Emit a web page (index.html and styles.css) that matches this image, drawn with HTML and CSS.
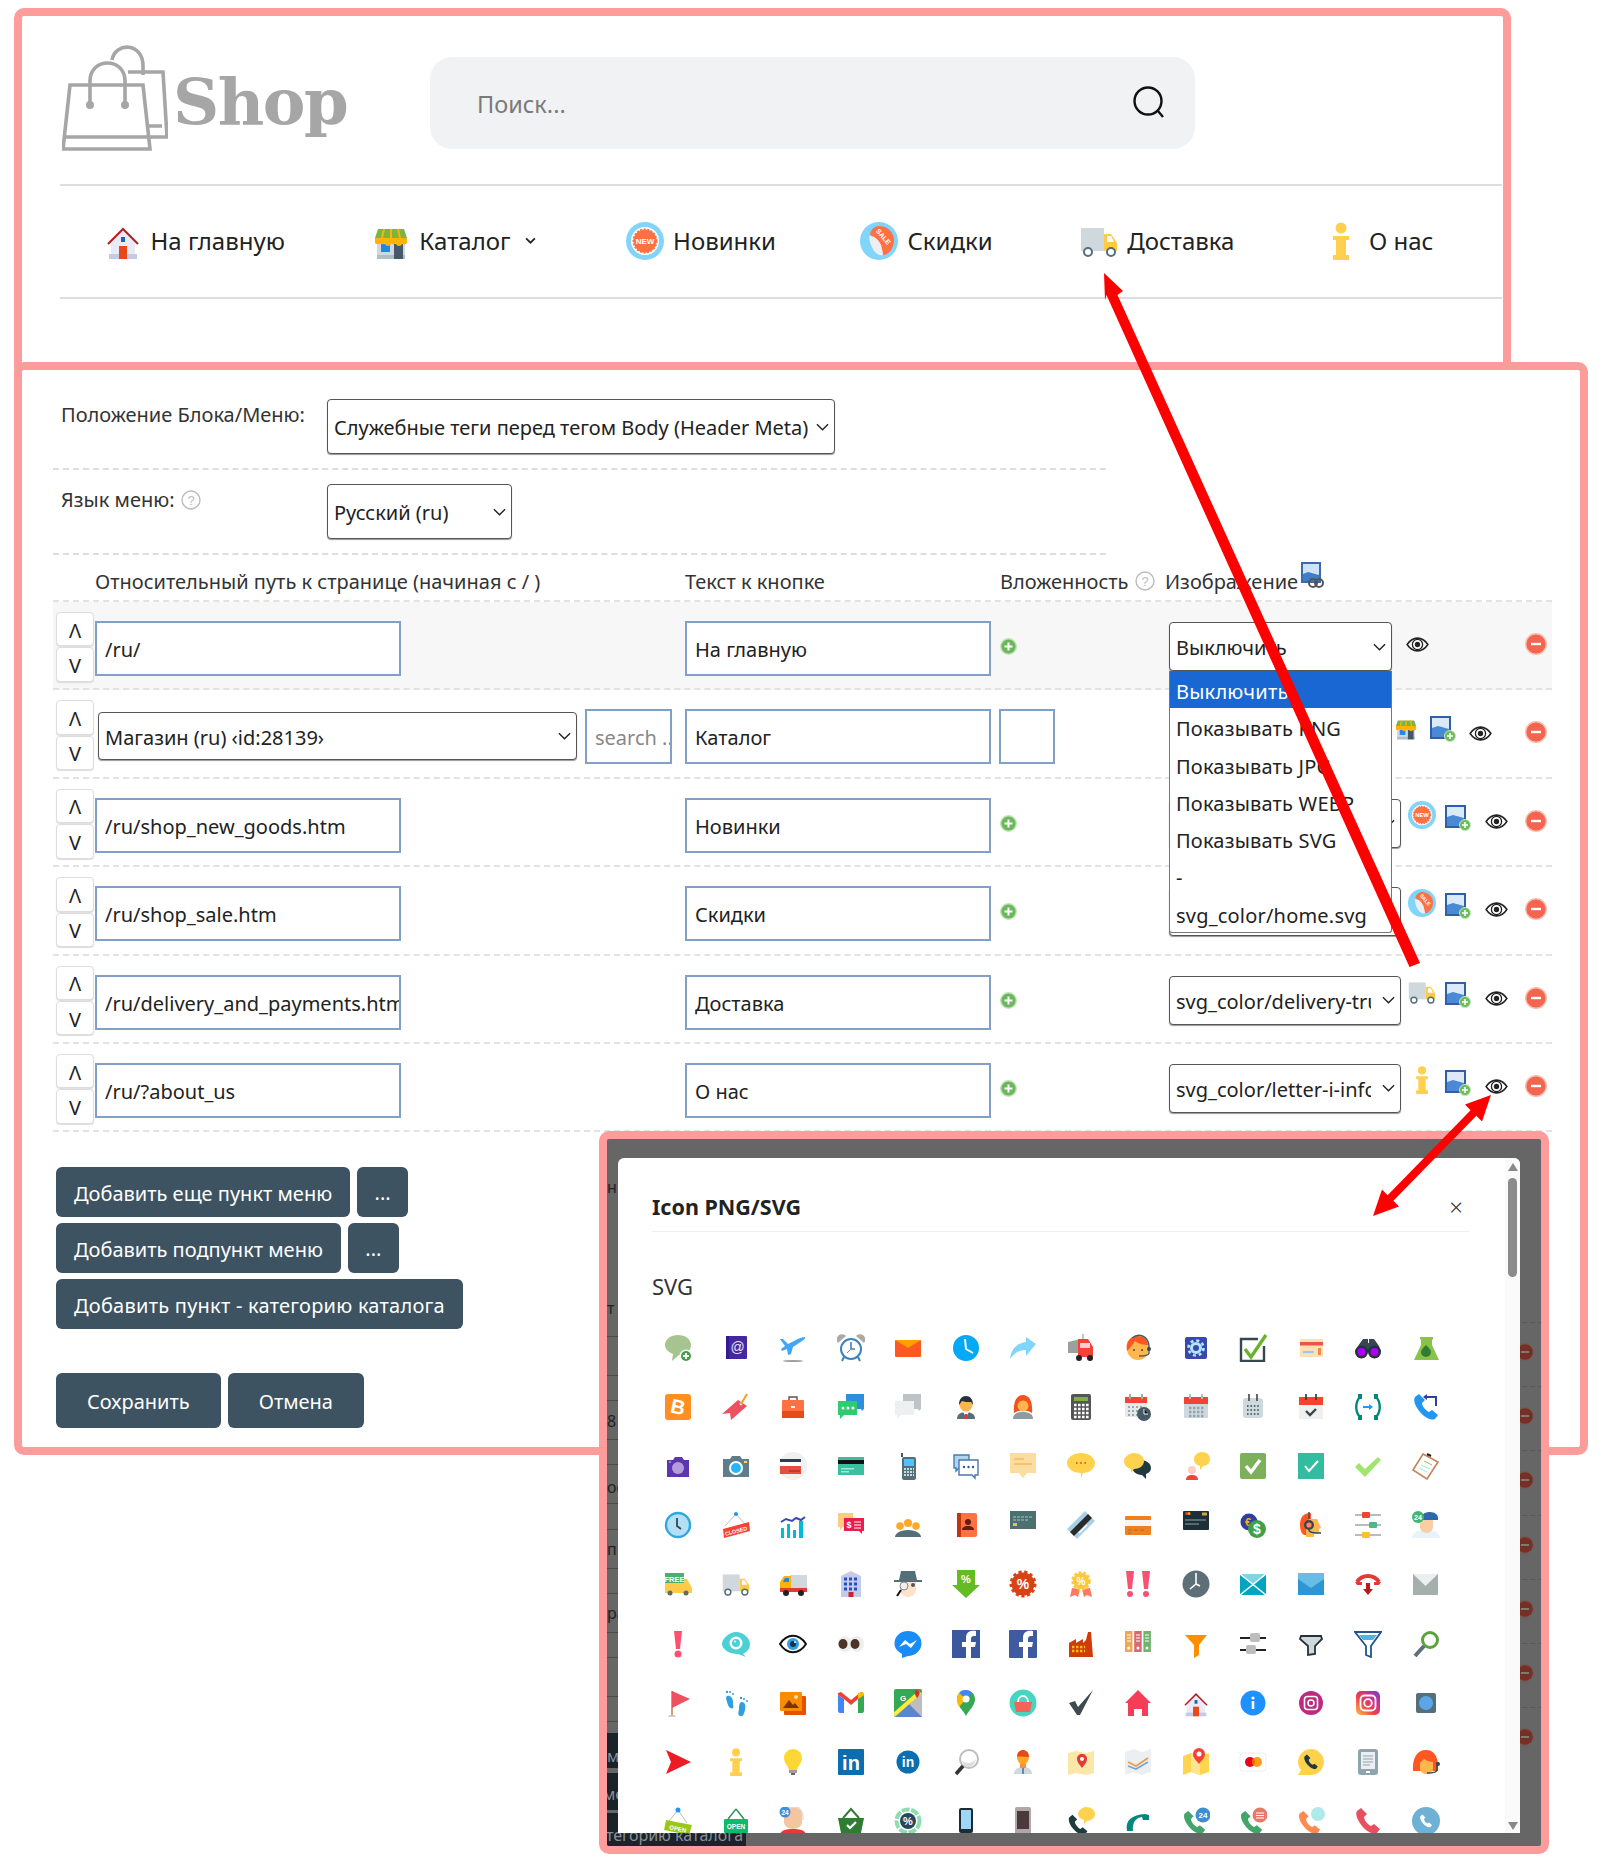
FILE: index.html
```html
<!DOCTYPE html>
<html lang="ru">
<head>
<meta charset="utf-8">
<title>Menu editor</title>
<link rel="stylesheet" href="styles.css">
</head>
<body>
<svg class="defs" aria-hidden="true">
<symbol id="home" viewBox="0 0 38 38"><path fill="#e8eaf6" d="M7 20 19 8l12 12v17H7z"/><path fill="#c5cae9" d="M5 32h28v5H5z"/><path fill="none" stroke="#b71c1c" stroke-width="2" d="M4 22 19 7l15 15"/><path fill="#e64a19" d="M15 24h8v13h-8z"/><path fill="#1565c0" d="M17 15h4v5h-4z"/></symbol>
<symbol id="shop" viewBox="0 0 38 38"><path fill="#cfd8dc" d="M5 18h28v19H5z"/><path fill="#b0bec5" d="M5 33h28v4H5z"/><path fill="#1e88e5" d="M9 22h9v8H9z"/><path fill="#455a64" d="M22 22h9v15h-9z"/><path fill="#7cb342" d="M6 7h26l3 9H3z"/><path fill="#ffb300" d="M3 16h32v5a3 3 0 0 1-5 0 3 3 0 0 1-6 0 3 3 0 0 1-5 0 3 3 0 0 1-6 0 3 3 0 0 1-5 0 3 3 0 0 1-5 0z"/><path stroke="#ffb300" stroke-width="2" d="M12 7l-2 9M19 7v9M26 7l2 9"/></symbol>
<symbol id="newb" viewBox="0 0 38 38"><circle cx="19" cy="19" r="19" fill="#81d4fa"/><circle cx="19" cy="19" r="14" fill="#fff"/><circle cx="19" cy="19" r="11.5" fill="#ff7043" stroke="#ff7043" stroke-width="2" stroke-dasharray="2 1.5"/><text x="19" y="22" class="st" font-size="8" fill="#fff">NEW</text></symbol>
<symbol id="sale" viewBox="0 0 38 38"><circle cx="19" cy="19" r="19" fill="#81d4fa"/><path fill="#ff7043" d="M19 4c8 0 15 6 15 14s-5 15-11 15l-2-10-11-11C11 7 15 4 19 4z"/><path fill="#eceff1" d="M9 14c4 0 8 1 12 9 1 4 2 8 2 10-7 2-13-8-14-19z"/><text x="23" y="17" class="st" font-size="7" fill="#fff" transform="rotate(50 23 15)">SALE</text></symbol>
<symbol id="truck" viewBox="0 0 38 38"><path fill="#cfd8dc" d="M1 6h23v23H1z"/><path fill="#ffca45" d="M24 12h7l6 9v8H24z"/><path fill="#fff" d="M27 14h4l3 6h-7z"/><circle cx="8" cy="30" r="4" fill="#fff" stroke="#546e7a" stroke-width="2"/><circle cx="31" cy="30" r="4" fill="#fff" stroke="#546e7a" stroke-width="2"/></symbol>
<symbol id="info" viewBox="0 0 38 38"><circle cx="19" cy="6" r="5.5" fill="#ffd050"/><path fill="#ffd050" d="M11 14h16v4h-3v15h3v5H11v-5h3V18h-3z"/></symbol>
<symbol id="eye" viewBox="0 0 24 18"><path fill="none" stroke="#222" stroke-width="1.6" d="M1 9c6-9 16-9 22 0-6 9-16 9-22 0z"/><circle cx="12" cy="9" r="5.4" fill="#fff" stroke="#222" stroke-width="1.4"/><circle cx="12" cy="9" r="2.8" fill="#222"/></symbol>
<symbol id="addimg" viewBox="0 0 27 27"><rect x="1" y="1" width="21" height="23" fill="#2e5fa7"/><rect x="3" y="3" width="17" height="19" fill="#dbe9f8"/><path fill="#4a8ad4" d="M3 13l6-2 11 3v8H3z"/><circle cx="21" cy="21" r="5.500" fill="#6dbb5a" stroke="#c6e4bd"/><path stroke="#fff" stroke-width="1.600" d="M21 18v6M18 21h6"/></symbol>
<symbol id="linkimg" viewBox="0 0 24 26"><rect x="1" y="0" width="20" height="21" fill="#3a6aaf"/><rect x="3" y="2" width="16" height="17" fill="#cfe2f7"/><path fill="#3f7fc9" d="M3 12l5-2 11 3v6H3z"/><circle cx="13" cy="21" r="4" fill="none" stroke="#555" stroke-width="2"/><circle cx="19" cy="21" r="4" fill="none" stroke="#555" stroke-width="2"/></symbol>
<symbol id="plus" viewBox="0 0 17 17"><circle cx="8.500" cy="8.500" r="7.800" fill="#6cb75c" stroke="#c3e3bb" stroke-width="1.400"/><path stroke="#fff" stroke-width="2" d="M8.500 4.500v8M4.500 8.500h8"/></symbol>
<symbol id="minus" viewBox="0 0 22 22"><circle cx="11" cy="11" r="10.300" fill="#f3654f" stroke="#f9bdb0" stroke-width="1.400"/><path stroke="#fff" stroke-width="2.400" d="M6 11h10"/></symbol>
<symbol id="help" viewBox="0 0 20 20"><circle cx="10" cy="10" r="9" fill="none" stroke="#bbb" stroke-width="1.4"/><text x="10" y="15" class="st2" font-size="13" fill="#bbb">?</text></symbol>
<symbol id="ph" viewBox="0 0 28 28"><path d="M7 1 3 4C1 7 3 13 8 19s12 9 15 7l3-4-6-5-3 2c-3-1-7-6-7-9l3-3z"/></symbol>
</svg>

<section class="shot shot-top">
  <header class="brand-row">
    <div class="logo">
      <svg class="logo-bags" viewBox="0 0 106 108"><g fill="none" stroke="#a6a6a6" stroke-width="3.600"><path d="M8 40h73l7 64H1zM3 92h83"/><path d="M28 60V36c0-24 35-24 35 0v24"/><path d="M50 15c3-18 31-18 31 6v9"/><path d="M66 27h35l4 65H86M85 81h15"/></g><circle cx="28" cy="60" r="4" fill="#a6a6a6"/><circle cx="63" cy="60" r="4" fill="#a6a6a6"/></svg>
      <span class="logo-text">Shop</span>
    </div>
    <div class="search">
      <span class="search-ph">Поиск...</span>
      <svg class="search-ic" viewBox="0 0 32 32"><circle cx="15" cy="15" r="13.500" fill="none" stroke="#111" stroke-width="2.400"/><path stroke="#111" stroke-width="2.400" d="M25 25l5 6"/></svg>
    </div>
  </header>
  <nav class="nav">
    <a class="nav-item"><svg class="nav-ic"><use href="#home"/></svg>На главную</a>
    <a class="nav-item nav-cat"><svg class="nav-ic"><use href="#shop"/></svg>Каталог<svg class="caret" viewBox="0 0 10 6"><path fill="none" stroke="#222" stroke-width="1.6" d="M1 1l4 4 4-4"/></svg></a>
    <a class="nav-item nav-new"><svg class="nav-ic"><use href="#newb"/></svg>Новинки</a>
    <a class="nav-item"><svg class="nav-ic"><use href="#sale"/></svg>Скидки</a>
    <a class="nav-item"><svg class="nav-ic"><use href="#truck"/></svg>Доставка</a>
    <a class="nav-item"><svg class="nav-ic"><use href="#info"/></svg>О нас</a>
  </nav>
</section>

<section class="shot shot-form">
  <div class="field field-a">
    <label class="field-label">Положение Блока/Меню:</label>
    <select class="sel sel-pos"><option>Служебные теги перед тегом Body (Header Meta)</option></select>
  </div>
  <div class="field field-b">
    <label class="field-label">Язык меню: <svg class="help"><use href="#help"/></svg></label>
    <select class="sel sel-lang"><option>Русский (ru)</option></select>
  </div>
  <div class="row head">
    <span class="c-path">Относительный путь к странице (начиная с / )</span>
    <span class="c-text">Текст к кнопке</span>
    <span class="c-nest">Вложенность <svg class="help"><use href="#help"/></svg></span>
    <span class="c-img">Изображение<svg class="link-img"><use href="#linkimg"/></svg></span>
  </div>

  <div class="row item first">
    <div class="updown"><button class="ud">Λ</button><button class="ud">V</button></div>
    <div class="c-path"><input class="inp inp-path" value="/ru/"></div>
    <div class="c-text"><input class="inp inp-text" value="На главную"></div>
    <div class="c-nest"><svg class="plus"><use href="#plus"/></svg></div>
    <div class="c-img">
      <select class="sel sel-short"><option>Выключить</option></select>
      <svg class="eye eye-first"><use href="#eye"/></svg>
      <svg class="minus"><use href="#minus"/></svg>
      <ul class="dropdown">
        <li class="on">Выключить</li><li>Показывать PNG</li><li>Показывать JPG</li><li>Показывать WEBP</li><li>Показывать SVG</li><li>-</li><li>svg_color/home.svg</li>
      </ul>
    </div>
  </div>

  <div class="row item">
    <div class="updown"><button class="ud">Λ</button><button class="ud">V</button></div>
    <div class="c-path cat">
      <select class="sel sel-cat"><option>Магазин (ru) ‹id:28139›</option></select>
      <input class="inp inp-search" placeholder="search ..">
    </div>
    <div class="c-text"><input class="inp inp-text" value="Каталог"></div>
    <div class="c-nest nest-box"><input class="inp inp-nest"></div>
    <div class="c-img cat-img">
      <svg class="shop-ic"><use href="#shop"/></svg>
      <svg class="addimg"><use href="#addimg"/></svg>
      <svg class="eye"><use href="#eye"/></svg>
      <svg class="minus"><use href="#minus"/></svg>
    </div>
  </div>

  <div class="row item">
    <div class="updown"><button class="ud">Λ</button><button class="ud">V</button></div>
    <div class="c-path"><input class="inp inp-path" value="/ru/shop_new_goods.htm"></div>
    <div class="c-text"><input class="inp inp-text" value="Новинки"></div>
    <div class="c-nest"><svg class="plus"><use href="#plus"/></svg></div>
    <div class="c-img">
      <select class="sel sel-wide"><option>svg_color/new.svg</option></select>
      <svg class="thumb"><use href="#newb"/></svg>
      <svg class="addimg"><use href="#addimg"/></svg>
      <svg class="eye"><use href="#eye"/></svg>
      <svg class="minus"><use href="#minus"/></svg>
    </div>
  </div>

  <div class="row item">
    <div class="updown"><button class="ud">Λ</button><button class="ud">V</button></div>
    <div class="c-path"><input class="inp inp-path" value="/ru/shop_sale.htm"></div>
    <div class="c-text"><input class="inp inp-text" value="Скидки"></div>
    <div class="c-nest"><svg class="plus"><use href="#plus"/></svg></div>
    <div class="c-img">
      <select class="sel sel-wide"><option>svg_color/sale.svg</option></select>
      <svg class="thumb"><use href="#sale"/></svg>
      <svg class="addimg"><use href="#addimg"/></svg>
      <svg class="eye"><use href="#eye"/></svg>
      <svg class="minus"><use href="#minus"/></svg>
    </div>
  </div>

  <div class="row item">
    <div class="updown"><button class="ud">Λ</button><button class="ud">V</button></div>
    <div class="c-path"><input class="inp inp-path" value="/ru/delivery_and_payments.htm"></div>
    <div class="c-text"><input class="inp inp-text" value="Доставка"></div>
    <div class="c-nest"><svg class="plus"><use href="#plus"/></svg></div>
    <div class="c-img">
      <select class="sel sel-wide"><option>svg_color/delivery-truck.svg</option></select>
      <svg class="thumb"><use href="#truck"/></svg>
      <svg class="addimg"><use href="#addimg"/></svg>
      <svg class="eye"><use href="#eye"/></svg>
      <svg class="minus"><use href="#minus"/></svg>
    </div>
  </div>

  <div class="row item last">
    <div class="updown"><button class="ud">Λ</button><button class="ud">V</button></div>
    <div class="c-path"><input class="inp inp-path" value="/ru/?about_us"></div>
    <div class="c-text"><input class="inp inp-text" value="О нас"></div>
    <div class="c-nest"><svg class="plus"><use href="#plus"/></svg></div>
    <div class="c-img">
      <select class="sel sel-wide"><option>svg_color/letter-i-info.svg</option></select>
      <svg class="thumb"><use href="#info"/></svg>
      <svg class="addimg"><use href="#addimg"/></svg>
      <svg class="eye"><use href="#eye"/></svg>
      <svg class="minus"><use href="#minus"/></svg>
    </div>
  </div>

  <div class="btn-rows">
    <div class="btn-row"><button class="btn">Добавить еще пункт меню</button><button class="btn btn-dots">...</button></div>
    <div class="btn-row"><button class="btn">Добавить подпункт меню</button><button class="btn btn-dots">...</button></div>
    <div class="btn-row"><button class="btn btn-long">Добавить пункт - категорию каталога</button></div>
  </div>
  <div class="btn-row save-row"><button class="btn btn-big">Сохранить</button><button class="btn btn-big">Отмена</button></div>
</section>

<section class="shot shot-modal">
  <div class="ghost-lines"></div>
  <div class="ghost-dash"></div>
  <div class="ghost-left">
    <span class="gl g1">н</span><span class="gl g2">т</span><span class="gl g3">8</span><span class="gl g4">ос</span><span class="gl g5">п</span><span class="gl g6">ра</span>
    <i class="gb gb1"></i><i class="gb gb2"></i><i class="gb gb3"></i>
    <span class="gl gd1">м</span><span class="gl gd2">ме</span><span class="gl gd3">тегорию каталога</span>
  </div>
  <div class="ghost-right">
    <svg class="gm"><use href="#minus"/></svg><svg class="gm"><use href="#minus"/></svg><svg class="gm"><use href="#minus"/></svg><svg class="gm"><use href="#minus"/></svg><svg class="gm"><use href="#minus"/></svg><svg class="gm"><use href="#minus"/></svg><svg class="gm"><use href="#minus"/></svg>
  </div>
  <div class="dialog">
    <div class="dlg-head"><h2 class="dlg-title">Icon PNG/SVG</h2><span class="dlg-x">×</span></div>
    <h3 class="dlg-sub">SVG</h3>
    <div class="grid">
<!-- row 1 -->
<svg class="gi" viewBox="0 0 28 28"><path fill="#a5c48f" d="M14 1c7 0 13 4 13 10s-5 10-12 10l-7 6 1-7C4 18 1 15 1 11 1 5 7 1 14 1z"/><circle cx="22" cy="22" r="6.5" fill="#fff"/><circle cx="22" cy="22" r="5" fill="#43a047"/><path stroke="#fff" stroke-width="2" d="M22 19v6M19 22h6"/></svg>
<svg class="gi" viewBox="0 0 28 28"><rect x="4" y="2" width="21" height="23" rx="1" fill="#4527a0"/><rect x="4" y="2" width="3" height="23" fill="#311b92"/><text x="15.5" y="18" class="st2" font-size="14" fill="#e8e3f5">@</text></svg>
<svg class="gi" viewBox="0 0 28 28"><path fill="#42a5f5" d="M1 5h3l5 5 8-4c3-2 7-3 9-3 1 2-3 4-6 6l-6 4-2 7-3 1-1-6-5 2-1-2 4-3z"/><ellipse cx="14" cy="27" rx="10" ry="1" fill="#9e9e9e"/></svg>
<svg class="gi" viewBox="0 0 28 28"><path fill="#aaa" d="M1 9a5 5 0 0 1 8-7zM27 9a5 5 0 0 0-8-7z"/><circle cx="14" cy="15" r="10" fill="#fff" stroke="#3d82bf" stroke-width="2"/><path fill="none" stroke="#3d82bf" stroke-width="1.6" d="M14 8v7h4"/><path stroke="#e57373" d="M14 15l-4 4"/><path stroke="#3d82bf" stroke-width="2" d="M7 23l-2 4M21 23l2 4"/></svg>
<svg class="gi" viewBox="0 0 28 28"><rect x="1" y="6" width="26" height="17" rx="1" fill="#ff5722"/><path fill="#ffa000" d="M1 6h26L14 14z"/></svg>
<svg class="gi" viewBox="0 0 28 28"><circle cx="14" cy="14" r="13" fill="#03a9f4"/><path fill="none" stroke="#fff" stroke-width="2" d="M13 5l1 10 7 4"/></svg>
<svg class="gi" viewBox="0 0 28 28"><path fill="#81d4fa" d="M27 10 17 3v5C8 9 2 15 1 25c4-6 9-9 16-9v6z"/></svg>
<svg class="gi" viewBox="0 0 28 28"><path fill="#9e9e9e" d="M1 8l13-3v14H1z"/><path fill="#f44336" d="M11 5h10l5 8v10H11z"/><rect x="13" y="9" width="10" height="5" fill="#ffcdd2"/><path stroke="#888" d="M16 5V0"/><circle cx="12" cy="24" r="3" fill="#222"/><circle cx="23" cy="24" r="3" fill="#222"/></svg>
<svg class="gi" viewBox="0 0 28 28"><circle cx="14" cy="15" r="11" fill="#ffb74d"/><path fill="#ff5722" d="M3 17C1 7 7 2 14 2s10 5 10 9c-4 0-10-1-13-4-2 3-4 6-8 10z"/><path fill="none" stroke="#455a64" stroke-width="1.4" d="M8 4c6-5 16-3 17 8v7c0 2-3 3-10 3"/><circle cx="25" cy="15" r="2" fill="#37474f"/><circle cx="10" cy="16" r="1" fill="#5d4037"/><circle cx="18" cy="16" r="1" fill="#5d4037"/></svg>
<svg class="gi" viewBox="0 0 28 28"><rect x="3" y="3" width="22" height="22" rx="2" fill="#3949ab"/><circle cx="14" cy="14" r="4.5" fill="none" stroke="#b3e5fc" stroke-width="3"/><circle cx="14" cy="14" r="7.5" fill="none" stroke="#b3e5fc" stroke-width="2.6" stroke-dasharray="3 2.9"/></svg>
<svg class="gi" viewBox="0 0 28 28"><path fill="none" stroke="#37474f" stroke-width="2.4" d="M19 5H2v22h23V12"/><path fill="none" stroke="#6ab12d" stroke-width="3.4" d="M6 15l6 8L27 1"/></svg>
<svg class="gi" viewBox="0 0 28 28"><rect x="3" y="5" width="23" height="18" fill="#ffe0b2"/><rect x="3" y="8" width="23" height="3.5" fill="#ef5350"/><rect x="6" y="17" width="11" height="2" fill="#90caf9"/><rect x="21" y="14" width="3" height="7" fill="#ef8a50"/></svg>
<svg class="gi" viewBox="0 0 28 28"><path fill="#37474f" d="M4 12 9 5h5v4h1V5h5l5 7 2 6H1z"/><circle cx="7.5" cy="18" r="6.5" fill="#263238"/><circle cx="20.5" cy="18" r="6.5" fill="#263238"/><circle cx="7.5" cy="18" r="4" fill="#aa00ff"/><circle cx="20.5" cy="18" r="4" fill="#aa00ff"/></svg>
<svg class="gi" viewBox="0 0 28 28"><path fill="#8bc34a" d="M8 3h13v2l-1 1v5l7 15H2L9 11V6L8 5z"/><path fill="#2e7d32" d="M14 11c3 3 5 5 5 7a5 5 0 0 1-10 0c0-2 2-4 5-7z"/></svg>
<!-- row 2 -->
<svg class="gi" viewBox="0 0 28 28"><rect x="1" y="1" width="26" height="26" rx="3" fill="#ff8f1f"/><text x="14" y="21" class="st" font-size="20" fill="#fff" transform="rotate(12 14 14)">B</text></svg>
<svg class="gi" viewBox="0 0 28 28"><path fill="#ef5060" d="M16 7l9 6L9 27l-1-7-8 1z"/><circle cx="19" cy="11" r="1.4" fill="#fff"/><path stroke="#f0a020" stroke-width="2" d="M19 11 25 1"/></svg>
<svg class="gi" viewBox="0 0 28 28"><path fill="none" stroke="#555" stroke-width="1.4" d="M10 7V4h8v3"/><rect x="3" y="7" width="22" height="18" rx="1" fill="#ff7043"/><rect x="3" y="18" width="22" height="7" fill="#e64a19"/><rect x="12" y="13" width="4" height="2" fill="#fff"/></svg>
<svg class="gi" viewBox="0 0 28 28"><path fill="#2f8fdc" d="M9 1h18v15l-2 2-1-2H9z"/><path fill="#2ecc71" d="M1 8h19v14H7l-4 4v-4H1z"/><circle cx="6" cy="15" r="1.5" fill="#fff"/><circle cx="11" cy="15" r="1.5" fill="#fff"/><circle cx="16" cy="15" r="1.5" fill="#fff"/></svg>
<svg class="gi" viewBox="0 0 28 28"><path fill="#bdc3c7" d="M9 1h18v15l-2 2-1-2H9z"/><path fill="#ecf0f1" d="M1 8h19v14H7l-4 4v-4H1z"/></svg>
<svg class="gi" viewBox="0 0 28 28"><path fill="#546e7a" d="M5 26c0-5 4-7 9-7s9 2 9 7z"/><path fill="#fff" d="M11 19h6l-3 5z"/><path fill="#e53935" d="M13 21h2l1 5h-4z"/><circle cx="14" cy="12" r="6.5" fill="#ffb74d"/><path fill="#263238" d="M7 12c0-6 3-9 7-9s7 3 7 9l-2-3c-3 0-7 0-9-1z"/></svg>
<svg class="gi" viewBox="0 0 28 28"><path fill="#8d9ba3" d="M4 26c0-5 4-7 10-7s10 2 10 7z"/><path fill="#f4511e" d="M5 20C4 8 8 2 14 2s10 6 9 18l-4-2H9z"/><circle cx="14" cy="13" r="5.5" fill="#ffb74d"/></svg>
<svg class="gi" viewBox="0 0 28 28"><rect x="4" y="1" width="20" height="26" rx="2" fill="#555"/><rect x="7" y="4" width="14" height="4" fill="#7cb342"/><path stroke="#fff" stroke-width="2.6" stroke-dasharray="2.6 1.4" d="M7 12h15M7 16h15M7 20h15M7 24h15"/></svg>
<svg class="gi" viewBox="0 0 28 28"><rect x="1" y="4" width="22" height="20" rx="1" fill="#e6e9eb"/><rect x="1" y="4" width="22" height="6" fill="#f44336"/><path stroke="#9aa" stroke-width="2" stroke-dasharray="2 2" d="M4 14h16M4 18h16M4 22h16"/><path stroke="#aaa" stroke-width="2" d="M6 6V1M18 6V1"/><circle cx="20" cy="21" r="7" fill="#455a64"/><path stroke="#fff" d="M20 16v5h4"/></svg>
<svg class="gi" viewBox="0 0 28 28"><rect x="2" y="4" width="24" height="21" rx="1" fill="#cfd8dc"/><rect x="2" y="4" width="24" height="7" fill="#f44336"/><path stroke="#90a4ae" stroke-width="2.4" stroke-dasharray="2.4 1.6" d="M7 15h15M7 19h15M7 23h15"/><path stroke="#bbb" stroke-width="2" d="M8 6V1M20 6V1"/></svg>
<svg class="gi" viewBox="0 0 28 28"><rect x="4" y="5" width="20" height="20" rx="3" fill="#cfd8dc"/><path stroke="#546e7a" stroke-width="2" stroke-dasharray="1.6 1.8" d="M8 13h13M8 17h13M8 21h13"/><path stroke="#444" stroke-width="1.6" d="M10 8V1M18 8V1"/></svg>
<svg class="gi" viewBox="0 0 28 28"><rect x="2" y="4" width="24" height="22" fill="#f0f0f0"/><rect x="2" y="4" width="24" height="8" fill="#f44336"/><path stroke="#444" stroke-width="1.8" d="M9 7V1M19 7V1"/><path fill="none" stroke="#37474f" stroke-width="2.4" d="M9 18l4 4 6-6"/></svg>
<svg class="gi" viewBox="0 0 28 28"><path fill="none" stroke="#00897b" stroke-width="2.400" d="M6 4C1 9 1 19 6 24M22 4c5 5 5 15 0 20"/><path fill="#00897b" d="M4 1h4v5H4zM4 22h4v5H4zM20 1h4v5h-4zM20 22h4v5h-4z"/><path stroke="#2196f3" stroke-width="2" d="M9 14h7"/><path fill="#2196f3" d="M15 11l4 3-4 3z"/></svg>
<svg class="gi" viewBox="0 0 28 28"><use href="#ph" fill="#2196f3"/><path fill="none" stroke="#303f9f" stroke-width="2" d="M13 4h11v9"/><path fill="#303f9f" d="M15 1v6l-4-3z"/></svg>
<!-- row 3 -->
<svg class="gi" viewBox="0 0 28 28"><path fill="#5e35b1" d="M3 8h6l2-3h7l2 3h5v17H3z"/><circle cx="14" cy="16" r="6" fill="#b39ddb"/><circle cx="6" cy="10" r="1" fill="#b39ddb"/></svg>
<svg class="gi" viewBox="0 0 28 28"><path fill="#607d8b" d="M1 7h7l2-3h8l2 3h7v18H1z"/><circle cx="14" cy="16" r="7" fill="#fff"/><circle cx="14" cy="16" r="5" fill="#29b6f6"/><rect x="22" y="9" width="3" height="2" fill="#ffd54f"/></svg>
<svg class="gi" viewBox="0 0 28 28"><circle cx="14" cy="14" r="14" fill="#f0f0f0"/><path fill="#e74c3c" d="M1 7h21v15H1z"/><rect x="1" y="10" width="21" height="4" fill="#fff"/><rect x="1" y="7" width="21" height="3" fill="#2c3e50"/><rect x="10" y="18" width="11" height="2" fill="#c0392b"/></svg>
<svg class="gi" viewBox="0 0 28 28"><rect x="1" y="5" width="26" height="18" fill="#3bbfa0"/><rect x="1" y="8" width="26" height="4" fill="#111"/><rect x="4" y="16" width="13" height="1.5" fill="#a6e6d6"/><rect x="4" y="19" width="8" height="1.5" fill="#a6e6d6"/></svg>
<svg class="gi" viewBox="0 0 28 28"><path stroke="#455a64" stroke-width="2" d="M8 5V1"/><rect x="8" y="5" width="14" height="23" rx="2" fill="#546e7a"/><rect x="10" y="7" width="10" height="7" fill="#4fc3f7"/><path stroke="#cfd8dc" stroke-width="2" stroke-dasharray="2 1" d="M10 17h10M10 20h10M10 23h10"/></svg>
<svg class="gi" viewBox="0 0 28 28"><path fill="#b3d4f0" stroke="#3f7fb5" stroke-width="1.4" d="M2 3h15v13H7l-3 3v-3H2z"/><path fill="#fff" stroke="#4a78b0" stroke-width="1.4" d="M7 8h19v15h-3v3l-3-3H7z"/><circle cx="12" cy="15" r="1.2" fill="#2c5a9c"/><circle cx="16.500" cy="15" r="1.2" fill="#2c5a9c"/><circle cx="21" cy="15" r="1.2" fill="#2c5a9c"/></svg>
<svg class="gi" viewBox="0 0 28 28"><path fill="#fbdd9f" d="M1 1h26v20H18l-4 5-4-5H1z"/><path stroke="#f3ba62" stroke-width="1.6" d="M5 7h10M5 12h18"/></svg>
<svg class="gi" viewBox="0 0 28 28"><path fill="#ffd24d" d="M14 1c7 0 14 4 14 10s-6 10-12 10l-2 5 0-5C7 21 0 17 0 11S7 1 14 1z"/><path stroke="#e53935" stroke-width="1.6" stroke-dasharray="1.600 2.600" d="M9 11h11"/></svg>
<svg class="gi" viewBox="0 0 28 28"><path fill="#1f3b40" d="M13 8c8-1 14 3 14 8 0 3-2 5-5 6l0 5-4-4c-6 0-10-4-10-8z"/><path fill="#ffd24d" d="M10 1c5 0 10 3 10 8s-5 8-10 8l-3 4v-4C3 16 0 13 0 9s5-8 10-8z"/></svg>
<svg class="gi" viewBox="0 0 28 28"><path fill="#ffd24d" d="M20 0c5 0 8 3 8 7s-3 7-7 7l-3 4v-4c-3-1-6-3-6-7s4-7 8-7z"/><circle cx="10" cy="18" r="4" fill="#ffd0c0"/><path fill="#f44336" d="M4 28c0-4 3-5 6-5s6 1 6 5z"/></svg>
<svg class="gi" viewBox="0 0 28 28"><rect x="1" y="1" width="26" height="26" rx="2" fill="#7cb05a"/><path fill="none" stroke="#fff" stroke-width="3.400" d="M7 14l5 6 9-12"/></svg>
<svg class="gi" viewBox="0 0 28 28"><rect x="1" y="1" width="26" height="26" fill="#33bda0"/><path fill="none" stroke="#fff" stroke-width="2" d="M8 14l4 5 9-10"/></svg>
<svg class="gi" viewBox="0 0 28 28"><path fill="#a0e56e" d="M1 15l4-4 6 6L24 5l3 3-16 17z"/></svg>
<svg class="gi" viewBox="0 0 28 28"><path fill="#fff" stroke="#c6825a" stroke-width="1.6" d="M11 2l15 8-11 17L1 18z"/><path stroke="#8bc34a" d="M12 9l8 4"/><path stroke="#9ec" d="M9 13l9 4M7 16l8 4"/><path stroke="#222" stroke-width="2" d="M15 2l4 2"/></svg>
<!-- row 4 -->
<svg class="gi" viewBox="0 0 28 28"><circle cx="14" cy="14" r="12" fill="#b3e0f7" stroke="#2fa8e0" stroke-width="2.400"/><path fill="none" stroke="#37474f" stroke-width="1.800" d="M13 7v8l4 3"/></svg>
<svg class="gi" viewBox="0 0 28 28"><path fill="none" stroke="#bbb" d="M14 3l-11 12M14 3l9 10"/><circle cx="14" cy="3" r="2" fill="#2196f3"/><path fill="#f44336" d="M1 18l26-7 1 9-26 7z"/><text x="14" y="22" class="st" font-size="5.500" fill="#fff" transform="rotate(-15 14 20)">CLOSED</text></svg>
<svg class="gi" viewBox="0 0 28 28"><path fill="#00bcd4" d="M2 17h3v10H2zM8 13h3v14H8zM14 19h3v8h-3zM20 10h4v17h-4z"/><path fill="none" stroke="#3949ab" stroke-width="2" d="M2 11l5-3 6 2 4-3 5 2 4-3"/></svg>
<svg class="gi" viewBox="0 0 28 28"><path fill="#ffcc80" d="M1 2h15v14H6l-3 3v-3H1z"/><path fill="#e91e4c" d="M7 7h20v13h-2v3l-3-3H7z"/><path stroke="#fff" d="M17 11h7M17 14h7M17 17h7"/><text x="12" y="17" class="st" font-size="9" fill="#fff">$</text></svg>
<svg class="gi" viewBox="0 0 28 28"><path fill="#546e7a" d="M1 26c0-3 4-7 13-7s13 4 13 7z"/><circle cx="6" cy="15" r="3.800" fill="#ffa726"/><circle cx="14" cy="12" r="4" fill="#ffa726"/><circle cx="22" cy="15" r="3.800" fill="#ffa726"/></svg>
<svg class="gi" viewBox="0 0 28 28"><rect x="5" y="2" width="20" height="24" rx="2" fill="#ff7043"/><rect x="5" y="2" width="4" height="24" fill="#bf360c"/><circle cx="16" cy="11" r="3" fill="#5d2010"/><path fill="#5d2010" d="M10 19c0-3 3-4 6-4s6 1 6 4z"/></svg>
<svg class="gi" viewBox="0 0 28 28"><rect x="1" y="0" width="26" height="18" fill="#4a7070"/><path stroke="#a8c4c4" stroke-dasharray="3 1" d="M4 6h20M4 9h16"/><rect x="4" y="12" width="4" height="3" fill="#e6c14a"/></svg>
<svg class="gi" viewBox="0 0 28 28"><path fill="#a9cfe6" d="M18 0l10 10L10 28 0 18z"/><path fill="#2a2a2a" d="M21 3l4 4L7 25l-4-4z"/><path stroke="#fff" stroke-width="1.600" d="M12 22l8-8"/></svg>
<svg class="gi" viewBox="0 0 28 28"><rect x="1" y="5" width="26" height="19" rx="1" fill="#f07f1e"/><rect x="1" y="9" width="26" height="6" fill="#f5f5f5"/><path stroke="#c46a18" d="M4 19h4M10 19h4M16 19h4M4 22h3"/></svg>
<svg class="gi" viewBox="0 0 28 28"><rect x="1" y="0" width="26" height="19" rx="1" fill="#1f2f38"/><circle cx="4.500" cy="2.500" r="1.500" fill="#e53935"/><circle cx="7" cy="2.500" r="1.500" fill="#ffa000"/><rect x="20" y="1.500" width="5" height="3" fill="#c9a74b"/><path stroke="#8aa" d="M3 9h21M3 13h14"/></svg>
<svg class="gi" viewBox="0 0 28 28"><circle cx="10" cy="11" r="8.500" fill="#303f9f"/><text x="9" y="15" class="st" font-size="11" fill="#ffb300">€</text><circle cx="18" cy="18" r="9" fill="#43a047"/><text x="18" y="23" class="st" font-size="14" fill="#fff">$</text></svg>
<svg class="gi" viewBox="0 0 28 28"><path fill="#ff5722" d="M3 13C3 5 8 2 14 2v22H7C4 22 3 18 3 13z"/><path fill="#ffb74d" d="M12 8h8l4 9-2 1v5h-5v3H9v-8z"/><circle cx="12" cy="14" r="5" fill="#37474f"/><circle cx="12" cy="14" r="2.600" fill="#ff8a65"/><path fill="none" stroke="#37474f" stroke-width="1.400" d="M12 8V1M12 19c0 3 6 3 12 3"/></svg>
<svg class="gi" viewBox="0 0 28 28"><path stroke="#bbb" stroke-width="2" d="M1 4h26M1 14h26M1 24h26"/><rect x="8" y="1" width="8" height="6" rx="1" fill="#f44336"/><rect x="15" y="11" width="8" height="6" rx="1" fill="#4db88a"/><rect x="8" y="21" width="8" height="6" rx="1" fill="#fbc02d"/></svg>
<svg class="gi" viewBox="0 0 28 28"><path fill="#e8f3fb" d="M0 27c1-6 6-8 14-8s13 2 14 8z"/><path fill="#f8cfa4" d="M8 9h13v7c0 3-3 6-6.500 6S8 19 8 16z"/><path fill="#2c69ac" d="M9 8c0-5 4-7 9-7 5 0 8 3 8 6v2H9z"/><circle cx="6" cy="6" r="6" fill="#43b572"/><text x="6" y="9" class="st" font-size="7" fill="#fff">24</text></svg>
<!-- row 5 -->
<svg class="gi" viewBox="0 0 28 28"><path fill="#ffca45" d="M1 12h18v-3h4l5 9v5H1z"/><rect x="1" y="3" width="19" height="10" fill="#4caf70"/><text x="10.500" y="11.500" class="st" font-size="7.500" fill="#fff">FREE</text><circle cx="6" cy="23" r="2.500" fill="#5f6a6f"/><circle cx="22" cy="23" r="2.500" fill="#5f6a6f"/></svg>
<svg class="gi" viewBox="0 0 28 28"><use href="#truck"/></svg>
<svg class="gi" viewBox="0 0 28 28"><path fill="#cfd8dc" d="M11 5h17v16H11z"/><path fill="#ffb300" d="M1 12l4-6h7v15H1z"/><path fill="#1e88e5" d="M4 12l2-4h4v4z"/><rect x="1" y="18" width="27" height="4" fill="#e53935"/><circle cx="7" cy="23" r="3" fill="#222"/><circle cx="22" cy="23" r="3" fill="#222"/></svg>
<svg class="gi" viewBox="0 0 28 28"><path fill="#c5cae9" d="M4 6l10-5 10 5v21H4z"/><path stroke="#1e50c8" stroke-width="3" stroke-dasharray="3 2" d="M7 9h15M7 14h15M7 19h15"/><rect x="11.500" y="22" width="5" height="5" fill="#c62828"/></svg>
<svg class="gi" viewBox="0 0 28 28"><path fill="#546e7a" d="M7 1h14l2 9h5v2H0v-2h5z"/><path fill="#ffe0c8" d="M6 12h16v7c0 5-4 8-8 8s-8-3-8-8z"/><circle cx="10" cy="16" r="4" fill="#eee" stroke="#888"/><circle cx="19" cy="15" r="2" fill="#555"/><path stroke="#111" stroke-width="2" d="M7 20l-4 6"/></svg>
<svg class="gi" viewBox="0 0 28 28"><path fill="#64bb24" d="M5 0h18v15h5L14 28 0 15h5z"/><text x="14" y="13" class="st" font-size="11" fill="#fff">%</text></svg>
<svg class="gi" viewBox="0 0 28 28"><circle cx="14" cy="14" r="11.500" fill="#d84315" stroke="#d84315" stroke-width="4" stroke-dasharray="3 2.500"/><text x="14" y="19" class="st" font-size="14" fill="#fff">%</text></svg>
<svg class="gi" viewBox="0 0 28 28"><path fill="#ff7860" d="M5 18l-2 9 5-2 3 2 2-8zM23 18l2 9-5-2-3 2-2-8z"/><circle cx="14" cy="11" r="8" fill="#ffc83c" stroke="#ffc83c" stroke-width="3.600" stroke-dasharray="2.600 1.800"/><text x="14" y="15" class="st" font-size="10" fill="#fff">%</text></svg>
<svg class="gi" viewBox="0 0 28 28"><path fill="#ff5072" d="M2 1h8l-2 18H4zM18 1h8l-2 18h-4z"/><circle cx="6" cy="24" r="3" fill="#ff5072"/><circle cx="22" cy="24" r="3" fill="#ff5072"/></svg>
<svg class="gi" viewBox="0 0 28 28"><circle cx="14" cy="14" r="13.500" fill="#5f6f78"/><path fill="none" stroke="#fff" stroke-width="1.600" d="M14 3v11l-6 5M14 14l4 2"/></svg>
<svg class="gi" viewBox="0 0 28 28"><rect x="1" y="4" width="26" height="21" fill="#00a5c0"/><path fill="#80d4e4" d="M1 4h26L14 14z"/><path stroke="#fff" stroke-width="1.600" d="M1 4l26 21M27 4L1 25"/></svg>
<svg class="gi" viewBox="0 0 28 28"><rect x="1" y="3" width="26" height="22" fill="#2e96d2"/><path fill="#66bde6" d="M1 3h26v6L14 18 1 9z"/></svg>
<svg class="gi" viewBox="0 0 28 28"><path fill="none" stroke="#e53935" stroke-width="4" d="M3 12c5-8 17-8 22 0"/><path fill="#e53935" d="M1 12h7v3H3zM20 12h7l-2 3h-5z"/><path fill="#b71c1c" d="M12 13h4v6h3l-5 6-5-6h3z"/></svg>
<svg class="gi" viewBox="0 0 28 28"><rect x="1" y="4" width="25" height="21" fill="#a5b0ad"/><path fill="#eceff1" d="M1 4h25L13.500 16z"/></svg>
<!-- row 6 -->
<svg class="gi" viewBox="0 0 28 28"><path fill="#ff5072" d="M10 1h8l-2 18h-4z"/><circle cx="14" cy="24" r="3.500" fill="#ff5072"/></svg>
<svg class="gi" viewBox="0 0 28 28"><path fill="#4dcfd6" d="M14 2c7 0 14 6 14 12s-4 8-7 10l3 3-8-3C7 24 0 19 0 14S7 2 14 2z"/><circle cx="14" cy="13" r="6.500" fill="#fff"/><circle cx="14" cy="13" r="4" fill="#4dcfd6"/><circle cx="13" cy="11.500" r="1" fill="#fff"/></svg>
<svg class="gi" viewBox="0 0 28 28"><path fill="#fff" stroke="#111" stroke-width="2" d="M1 14c7-11 19-11 26 0-7 11-19 11-26 0z"/><circle cx="14" cy="14" r="6" fill="#2f9fe0"/><circle cx="14" cy="14" r="3" fill="#14335a"/><circle cx="16" cy="12" r="1" fill="#fff"/></svg>
<svg class="gi" viewBox="0 0 28 28"><ellipse cx="8" cy="14" rx="7" ry="8" fill="#eee"/><ellipse cx="20" cy="14" rx="7" ry="8" fill="#eee"/><ellipse cx="6" cy="14" rx="4.500" ry="5" fill="#4a3526"/><ellipse cx="18" cy="14" rx="4.500" ry="5" fill="#4a3526"/></svg>
<svg class="gi" viewBox="0 0 28 28"><path fill="#1a8cf5" d="M14 1c8 0 13.500 5.500 13.500 12.500S21 26 14 26l-6 2v-4C3 21 .5 18 .5 13.500.5 6.500 6 1 14 1z"/><path fill="#fff" d="M5 17l6-7 5 4 7-4-6 8-5-4z"/></svg>
<svg class="gi" viewBox="0 0 28 28"><rect width="28" height="28" fill="#3b579d"/><path fill="#fff" d="M19 28V17h4l1-5h-5V9c0-2 1-3 3-3h2V1c-6-1-10 1-10 7v4h-4v5h4v11z"/></svg>
<svg class="gi" viewBox="0 0 28 28"><rect width="28" height="28" rx="1" fill="#3f5aa0"/><path fill="#fff" d="M19 28V17h4l1-5h-5V9c0-2 1-3 3-3h2V1c-6-1-10 1-10 7v4h-4v5h4v11z"/></svg>
<svg class="gi" viewBox="0 0 28 28"><path fill="#d13b0a" d="M2 13l7-4v4l7-4v4l3-3 2-8h3l2 25H2z"/><path stroke="#ffc107" stroke-width="2.400" stroke-dasharray="2.400 1.600" d="M5 17h13M5 21h13"/></svg>
<svg class="gi" viewBox="0 0 28 28"><rect x="1" y="1" width="7.500" height="21" fill="#f0a850"/><rect x="10.200" y="1" width="7.500" height="21" fill="#d96a72"/><rect x="19.400" y="1" width="7.500" height="21" fill="#6fb56e"/><path stroke="#fff" d="M3 5h4M3 8h4M3 11h4M12 5h4M12 8h4M12 11h4M21 5h4M21 8h4M21 11h4"/><circle cx="4.700" cy="18" r="1.500" fill="#fff"/><circle cx="14" cy="18" r="1.500" fill="#fff"/><circle cx="23" cy="18" r="1.500" fill="#fff"/></svg>
<svg class="gi" viewBox="0 0 28 28"><path fill="#ff8f00" d="M3 5h22l-8 10v10l-5 3V15z"/></svg>
<svg class="gi" viewBox="0 0 28 28"><path stroke="#222" stroke-width="2" d="M1 8h26M1 20h26"/><rect x="11" y="3" width="10" height="9" rx="2" fill="#bdbdbd"/><rect x="7" y="15" width="10" height="9" rx="2" fill="#bdbdbd"/></svg>
<svg class="gi" viewBox="0 0 28 28"><path fill="#cfd8dc" stroke="#263238" stroke-width="1.800" d="M4 6h20l1 3-7 7v8l-7 1v-9L3 9z"/></svg>
<svg class="gi" viewBox="0 0 28 28"><path fill="#fff" stroke="#1f558f" stroke-width="1.800" d="M1 2l26 0-10 14v11l-5-2V16z"/><path fill="#4fb3ea" d="M5 5h18l-4 5H9z"/></svg>
<svg class="gi" viewBox="0 0 28 28"><circle cx="18" cy="10" r="7.500" fill="#fff" stroke="#5ea23f" stroke-width="3"/><path stroke="#5f6f80" stroke-width="4" d="M12 16 3 26"/></svg>
<!-- row 7 -->
<svg class="gi" viewBox="0 0 28 28"><rect x="7" y="2" width="2" height="25" fill="#d19b7c"/><path fill="#ef5060" d="M8 2l18 8-18 9z"/><ellipse cx="8" cy="27" rx="4" ry="1" fill="#ccc"/></svg>
<svg class="gi" viewBox="0 0 28 28"><path fill="#2f9fe0" d="M5 7c3-1 6 2 6 6s1 5 0 6-4 0-5-3-3-8-1-9zM20 13c3 0 4 4 3 8s-2 7-5 6-1-5-1-7 0-7 3-7z"/><circle cx="5" cy="3" r="1.200" fill="#2f9fe0"/><circle cx="8" cy="3" r="1" fill="#2f9fe0"/><circle cx="11" cy="5" r="1" fill="#2f9fe0"/><circle cx="19" cy="9" r="1.200" fill="#2f9fe0"/><circle cx="22" cy="10" r="1" fill="#2f9fe0"/><circle cx="25" cy="12" r="1" fill="#2f9fe0"/></svg>
<svg class="gi" viewBox="0 0 28 28"><rect x="5" y="7" width="22" height="19" rx="1" fill="#e65100"/><rect x="1" y="3" width="22" height="19" rx="1" fill="#fb8c00"/><path fill="#7f3300" d="M4 19l6-8 4 5 2-2 4 5z"/><circle cx="17" cy="8" r="2" fill="#ffe0b2"/></svg>
<svg class="gi" viewBox="0 0 28 28"><path fill="#4285f4" d="M1 6l6 4v14H3c-1 0-2-1-2-2z"/><path fill="#34a853" d="M27 6l-6 4v14h4c1 0 2-1 2-2z"/><path fill="#ea4335" d="M7 10 1 6V4l3-1 10 8 10-8 3 1v2l-6 4-7 6z"/><path fill="#fbbc04" d="M21 10V4l3-1 3 1v2z"/></svg>
<svg class="gi" viewBox="0 0 28 28"><rect width="28" height="28" rx="2" fill="#34a853"/><path fill="#bdbdbd" d="M14 14 28 3v25H16z"/><path fill="#5b85cf" d="M1 28l13-14 14 14z"/><path stroke="#ffeb3b" stroke-width="4" d="M0 26 26 3"/><path fill="#d32f2f" d="M23 9c-3-4-3-8 0-8s4 4 0 8z"/><text x="9" y="12" class="st" font-size="8" fill="#fff">G</text></svg>
<svg class="gi" viewBox="0 0 28 28"><path fill="#34a853" d="M14 27c-3-6-9-10-9-17 0-5 4-9 9-9s9 4 9 9c0 7-6 11-9 17z"/><path fill="#4285f4" d="M7 4c3-4 9-4 13 0l-6 6z"/><path fill="#fbbc04" d="M5 10c0-2 1-4 2-6l7 6-7 8c-1-2-2-5-2-8z"/><circle cx="14" cy="10" r="3.500" fill="#fff"/></svg>
<svg class="gi" viewBox="0 0 28 28"><circle cx="14" cy="14" r="13.500" fill="#46d6c0"/><path fill="#f0645a" d="M5 13h18l-2 10H7z"/><path fill="none" stroke="#fff" stroke-width="1.800" d="M9 13c0-8 10-8 10 0"/></svg>
<svg class="gi" viewBox="0 0 28 28"><path fill="#3f4a50" d="M2 14l6-2 3 6L26 1l-13 25h-3z"/></svg>
<svg class="gi" viewBox="0 0 28 28"><path fill="#f53d55" d="M14 1 27 14h-3v13h-6v-7h-8v7H4V14H1z"/></svg>
<svg class="gi" viewBox="0 0 28 28"><use href="#home"/></svg>
<svg class="gi" viewBox="0 0 28 28"><circle cx="14" cy="14" r="12.500" fill="#1e90ff"/><rect x="12.700" y="12" width="2.600" height="8" fill="#fff"/><circle cx="14" cy="9" r="1.600" fill="#fff"/></svg>
<svg class="gi" viewBox="0 0 28 28"><circle cx="14" cy="14" r="12" fill="#bd2a82"/><rect x="7.500" y="7.500" width="13" height="13" rx="3" fill="none" stroke="#fff" stroke-width="1.600"/><circle cx="14" cy="14" r="3" fill="none" stroke="#fff" stroke-width="1.600"/></svg>
<svg class="gi" viewBox="0 0 28 28"><defs><linearGradient id="ig" x1="0" y1="1" x2="1" y2="0"><stop offset="0" stop-color="#ffc04d"/><stop offset=".4" stop-color="#f0404f"/><stop offset=".75" stop-color="#c02fa0"/><stop offset="1" stop-color="#5a4fd0"/></linearGradient></defs><rect x="2" y="2" width="24" height="24" rx="5" fill="url(#ig)"/><rect x="6.500" y="6.500" width="15" height="15" rx="4" fill="none" stroke="#fff" stroke-width="1.800"/><circle cx="14" cy="14" r="3.800" fill="none" stroke="#fff" stroke-width="1.800"/></svg>
<svg class="gi" viewBox="0 0 28 28"><rect x="4" y="4" width="20" height="20" rx="2" fill="#546e7a"/><circle cx="14" cy="14" r="7" fill="#5aa6e8"/></svg>
<!-- row 8 -->
<svg class="gi" viewBox="0 0 28 28"><path fill="#ed1c24" d="M2 2l25 12-25 12 5-12z"/></svg>
<svg class="gi" viewBox="0 0 28 28"><use href="#info"/></svg>
<svg class="gi" viewBox="0 0 28 28"><path fill="#fdd835" d="M14 1c5 0 9 4 9 9 0 6-5 8-5 13h-8c0-5-5-7-5-13 0-5 4-9 9-9z"/><rect x="10" y="22" width="8" height="3" fill="#9e9e9e"/><rect x="12" y="25" width="4" height="2" fill="#666"/></svg>
<svg class="gi" viewBox="0 0 28 28"><rect x="1" y="1" width="26" height="26" rx="1" fill="#0a6eb0"/><text x="14" y="22" class="st" font-size="20" fill="#fff">in</text></svg>
<svg class="gi" viewBox="0 0 28 28"><circle cx="14" cy="14" r="11.500" fill="#0a6eb0"/><text x="14" y="19" class="st" font-size="14" fill="#fff">in</text></svg>
<svg class="gi" viewBox="0 0 28 28"><circle cx="17" cy="11" r="9" fill="#fff" stroke="#bdbdbd" stroke-width="2"/><path fill="#ddd" d="M10 12c3 4 10 4 14-1-1 6-5 8-8 8s-5-3-6-7z"/><path stroke="#333" stroke-width="3.500" d="M11 18l-7 8"/></svg>
<svg class="gi" viewBox="0 0 28 28"><path fill="#cfd8dc" d="M5 26c0-5 4-7 9-7s9 2 9 7z"/><path stroke="#3f6fb0" stroke-width="1.500" d="M14 19v7"/><path fill="#ff8f3c" d="M11 14h6v6h-6z"/><circle cx="14" cy="10" r="6" fill="#ffa726"/><path fill="#e64a19" d="M8 9c0-5 3-7 6-7s6 2 6 7c-4 0-9-1-12 0z"/></svg>
<svg class="gi" viewBox="0 0 28 28"><path fill="#fbe7a8" d="M1 5l8-2 10 2 8-2v22l-8 2-10-2-8 2z"/><path fill="#e53935" d="M15 20c-3-4-5-6-5-9s2-5 5-5 5 2 5 5-2 5-5 9z"/><circle cx="15" cy="11" r="2" fill="#fff"/></svg>
<svg class="gi" viewBox="0 0 28 28"><path fill="#eceff1" d="M1 4l9-3 8 3 9-3v23l-9 3-8-3-9 3z"/><path fill="none" stroke="#ef9a3c" stroke-width="1.600" d="M4 14l8 4 12-8"/><path fill="none" stroke="#6fa8dc" stroke-width="1.600" d="M4 18l8 3 12-7"/></svg>
<svg class="gi" viewBox="0 0 28 28"><path fill="#ffd54f" d="M1 8l8-3 9 3 9-3v19l-9 3-9-3-8 3z"/><path fill="#ffe58f" d="M9 5v19l9 3V8z"/><path fill="#f44336" d="M17 16c-3-4-6-6-6-10a6 6 0 0 1 12 0c0 4-3 6-6 10z"/><circle cx="17" cy="6" r="2.500" fill="#fff"/></svg>
<svg class="gi" viewBox="0 0 28 28"><rect x="1" y="5" width="26" height="18" rx="3" fill="#fff" stroke="#eee"/><circle cx="11" cy="14" r="5" fill="#eb001b"/><circle cx="18" cy="14" r="5" fill="#f79e1b"/><path fill="#ff5f00" d="M14.500 10.400a5 5 0 0 1 0 7.200 5 5 0 0 1 0-7.200z"/></svg>
<svg class="gi" viewBox="0 0 28 28"><path fill="#ffd24d" d="M14 1c7 0 13 6 13 13s-6 13-13 13H1l3-5C2 19 1 17 1 14 1 7 7 1 14 1z"/><use href="#ph" x="6" y="6" width="16" height="16" fill="#1f3b40"/></svg>
<svg class="gi" viewBox="0 0 28 28"><rect x="4" y="1" width="20" height="26" rx="3" fill="#90a4ae"/><rect x="7" y="4" width="14" height="17" fill="#eceff1"/><path stroke="#90a4ae" stroke-width="1.200" d="M9 8h10M9 11h10M9 14h10M9 17h7"/><rect x="12" y="23" width="4" height="2" fill="#fff"/></svg>
<svg class="gi" viewBox="0 0 28 28"><path fill="#ff5722" d="M1 23C0 10 5 2 14 2s13 8 12 21z"/><path fill="#ffb74d" d="M8 15l4-4c3 2 6 3 9 3v6c0 4-3 6-6.500 6S8 24 8 20z"/><path fill="none" stroke="#37474f" stroke-width="1.400" d="M25 14v8c0 2-3 3-10 3"/><circle cx="26" cy="16" r="2" fill="#37474f"/></svg>
<!-- row 9 -->
<svg class="gi" viewBox="0 0 28 28"><path fill="none" stroke="#bbb" d="M14 3l-9 11M14 3l9 13"/><circle cx="14" cy="3" r="2.500" fill="#2196f3"/><path fill="#9ac81a" d="M2 13l26 5-3 10-25-5z"/><text x="14" y="24" class="st" font-size="6" fill="#fff" transform="rotate(11 14 21)">OPEN</text></svg>
<svg class="gi" viewBox="0 0 28 28"><path fill="none" stroke="#2e8b62" stroke-width="1.400" d="M14 2l-8 10M14 2l8 10"/><rect x="2" y="12" width="24" height="14" rx="1" fill="#0dbb6a"/><text x="14" y="21.500" class="st" font-size="6.500" fill="#fff">OPEN</text></svg>
<svg class="gi" viewBox="0 0 28 28"><path fill="#e53935" d="M1 28c0-4 5-6 13-6s13 2 13 6z"/><path fill="#f5c5a0" d="M5 7a9 9 0 0 1 18 0v8c0 4-4 7-9 7s-9-3-9-7z"/><path fill="none" stroke="#ddd" stroke-width="1.400" d="M10 1c8-3 15 1 14 12"/><circle cx="6" cy="5" r="5.500" fill="#3f8fe0"/><text x="6" y="8" class="st" font-size="6.500" fill="#fff">24</text></svg>
<svg class="gi" viewBox="0 0 28 28"><path fill="#2e7d32" d="M1 11h26l-3 15H4z"/><path fill="none" stroke="#2e7d32" stroke-width="2" d="M6 11l8-9 8 9"/><path fill="none" stroke="#fff" stroke-width="2.200" d="M10 18l3 3 6-6"/></svg>
<svg class="gi" viewBox="0 0 28 28"><circle cx="14" cy="14" r="11.500" fill="none" stroke="#8fdcae" stroke-width="4" stroke-dasharray="8 1.500"/><circle cx="14" cy="14" r="8" fill="#27485a"/><text x="14" y="18" class="st" font-size="11" fill="#fff">%</text></svg>
<svg class="gi" viewBox="0 0 28 28"><rect x="7" y="1" width="14" height="25" rx="2" fill="#1d2b36"/><rect x="9" y="3" width="10" height="19" fill="#9ed6f7"/></svg>
<svg class="gi" viewBox="0 0 28 28"><rect x="6" y="0" width="16" height="28" rx="2" fill="#b0a8a8"/><rect x="8" y="4" width="12" height="18" fill="#4a3a3a"/></svg>
<svg class="gi" viewBox="0 0 28 28"><use href="#ph" x="0" y="7" width="22" height="22" fill="#1f3b40"/><path fill="#ffd24d" d="M19 0c5 0 9 3 9 7s-4 7-8 7l-3 3v-4c-3-1-6-3-6-6s4-7 8-7z"/></svg>
<svg class="gi" viewBox="0 0 28 28"><path fill="#00897b" d="M3 24c-2-11 5-16 18-17l4 1v5h-6l-1-3c-6 1-10 5-9 14z"/></svg>
<svg class="gi" viewBox="0 0 28 28"><use href="#ph" x="0" y="3" width="25" height="25" fill="#43a56a"/><circle cx="21" cy="8" r="7.500" fill="#3f8fd0"/><text x="21" y="11" class="st" font-size="8" fill="#fff">24</text></svg>
<svg class="gi" viewBox="0 0 28 28"><use href="#ph" x="0" y="3" width="25" height="25" fill="#43a56a"/><circle cx="21" cy="8" r="7.500" fill="#e8796a"/><path stroke="#fff" d="M17 6h8M17 8.500h8M17 11h8"/></svg>
<svg class="gi" viewBox="0 0 28 28"><use href="#ph" x="0" y="3" width="25" height="25" fill="#ff8a50"/><circle cx="21" cy="7" r="7" fill="#aeeaea"/></svg>
<svg class="gi" viewBox="0 0 28 28"><use href="#ph" x="0" y="0" width="28" height="28" fill="#e8505f"/></svg>
<svg class="gi" viewBox="0 0 28 28"><circle cx="14" cy="14" r="14" fill="#6fb0d5"/><use href="#ph" x="7" y="7" width="14" height="14" fill="#fff"/></svg>
    </div>
    <div class="sbar"><i class="sb-up"></i><i class="sb-thumb"></i><i class="sb-down"></i></div>
  </div>
</section>

<svg class="arrows" viewBox="0 0 1600 1863" aria-hidden="true">
  <path fill="#fe0000" d="M1104 273l1 27 1.500-5 303 672 10.500-4L1117.500 295l5.500-4z"/>
  <path fill="#fe0000" d="M1491 1095l-9 26.400-5.600-5.600-83 85 5.600 5.600L1373 1216l9-26.400 5.600 5.600 83-85-5.600-5.600z"/>
</svg>
</body>
</html>
```
FILE: styles.css
```css
* { box-sizing: border-box; }
html, body { margin: 0; padding: 0; }
body {
  position: relative;
  width: 1600px;
  height: 1863px;
  overflow: hidden;
  background: #fff;
  font-family: "Noto Sans", "Open Sans", sans-serif;
  color: #222;
  font-size: 20px;
}
.defs { display: none; }
.st { font-family: "Liberation Sans", sans-serif; font-weight: 700; text-anchor: middle; }
.st2 { font-family: "Liberation Sans", sans-serif; text-anchor: middle; }

.shot {
  position: absolute;
  border: 8px solid #fe9c9c;
  border-radius: 10px;
  background: #fff;
}

/* top shot */
.shot-top { left: 14px; top: 8px; width: 1497px; height: 370px; padding: 0 1px 0 38px; }
.brand-row { display: flex; height: 168px; }
.logo { display: flex; align-items: flex-start; margin: 29px 0 0 2px; width: 368px; }
.logo-bags { width: 106px; height: 108px; flex: none; }
.logo-text {
  font: 700 64px/1 "DejaVu Serif", serif;
  letter-spacing: -1.5px;
  color: #a6a6a6;
  margin: 25px 0 0 5px;
}
.search {
  width: 765px;
  height: 92px;
  margin-top: 41px;
  background: #f1f2f4;
  border-radius: 22px;
  display: flex;
  align-items: center;
  justify-content: space-between;
  padding: 2px 30px 0 47px;
}
.search-ph { color: #7a7a7a; font-size: 23.5px; }
.search-ic { width: 32px; height: 32px; margin-top: -5px; }
.nav {
  display: flex;
  align-items: center;
  gap: 87.5px;
  height: 115px;
  border-top: 2px solid #ddd;
  border-bottom: 2px solid #ddd;
  padding: 0 0 2px 43.5px;
  font-size: 24px;
}
.nav-item { display: flex; align-items: center; gap: 9px; color: #222; }
.nav-ic { width: 38px; height: 38px; flex: none; }
.caret { width: 11px; height: 7px; margin: 0 3px 0 5px; }
.nav-new { margin-right: -3px; }

/* form shot */
.shot-form { left: 14px; top: 362px; width: 1574px; height: 1093px; padding: 0 28px 0 31px; z-index: 2; }
.field { display: flex; width: 1053px; border-bottom: 2px dashed #ddd; align-items: flex-start; }
.field-a { height: 100px; padding-top: 29px; }
.field-b { height: 85px; padding-top: 14px; }
.field-label { width: 274px; padding-left: 8px; color: #333; margin-top: 2px; display: flex; align-items: center; gap: 6px; }
.help { width: 20px; height: 20px; }
.sel {
  appearance: none;
  -webkit-appearance: none;
  font: 20px "Noto Sans", sans-serif;
  color: #222;
  background: #fff url("data:image/svg+xml,%3Csvg xmlns='http://www.w3.org/2000/svg' viewBox='0 0 14 8'%3E%3Cpath d='M1 1l6 6 6-6' fill='none' stroke='%23222' stroke-width='1.500'/%3E%3C/svg%3E") no-repeat right 5px center / 13px 8px;
  border: 1px solid #555;
  border-radius: 4px;
  box-shadow: 0 1px 1px #999;
  padding: 2px 24px 0 6px;
}
.sel-pos { width: 508px; height: 55px; }
.sel-lang { width: 185px; height: 55px; }
.sel-cat { width: 479px; height: 48px; margin-top: 3px; }
.sel-short { width: 223px; height: 49px; flex: none; }
.sel-wide { width: 232px; height: 49px; flex: none; padding-right: 29px; }

.row { display: grid; grid-template-columns: 42px 590px 315px 169px 1fr; height: 88.4px; border-bottom: 2px dashed #e2e2e2; }
.head { height: 47px; padding-top: 7px; align-items: center; }
.head .c-path { grid-column: 2; }
.head .c-text { grid-column: 3; }
.head .c-nest { grid-column: 4; display: flex; align-items: center; gap: 6px; }
.head .c-img { grid-column: 5; margin-left: -4px; display: flex; align-items: center; }
.head span { color: #333; white-space: nowrap; }
.link-img { width: 24px; height: 26px; margin: -12px 0 0 2px; }
.first { background: #f7f7f7; }

.updown { display: flex; flex-direction: column; gap: 1px; padding: 10px 0 0 3px; }
.ud {
  width: 38px;
  height: 34.4px;
  border: 1px solid #ddd;
  border-radius: 4px;
  background: #fff;
  font: 20px "Noto Sans", sans-serif;
  color: #222;
  padding: 2px 0 0;
  box-shadow: 0 1px 1px #ddd;
}
.item .c-path, .item .c-text { padding-top: 19px; }
.item .c-nest { padding-top: 32px; }
.item .c-img { padding-top: 20px; display: flex; align-items: flex-start; position: relative; }
.inp {
  height: 55px;
  border: 2px solid #82a0c6;
  background: #fff;
  font: 20px "Noto Sans", sans-serif;
  color: #222;
  padding: 2px 0 0 8px;
  outline: 0;
}
.inp-path { width: 306px; }
.inp-text { width: 306px; }
.inp-search { width: 87px; margin-left: 8px; }
.inp-search::placeholder { color: #888; }
.inp-nest { width: 56px; }
.item .cat { display: flex; align-items: flex-start; margin-left: 3px; }
.item .nest-box { padding-top: 19px; margin-left: -1px; }
.plus { width: 17px; height: 17px; }
.eye { width: 23px; height: 17px; margin: 14px 0 0 14px; flex: none; }
.eye-first { margin: 14px 0 0 14px; }
.minus { width: 22px; height: 22px; position: absolute; left: 356px; top: 31px; }
.thumb { width: 28px; height: 28px; margin: 2px 0 0 7px; flex: none; }
.addimg { width: 27px; height: 27px; margin: 5px 0 0 8px; flex: none; }
.item .cat-img { padding-left: 225px; }
.shop-ic { width: 24px; height: 24px; flex: none; margin-top: 6px; }
.cat-img .addimg { margin: 5px 0 0 11px; }
.cat-img .eye { margin: 15px 0 0 13px; }

.dropdown {
  position: absolute;
  left: 0;
  top: 69px;
  width: 223px;
  margin: 0;
  padding: 0;
  list-style: none;
  background: #fff;
  border: 1px solid #777;
  border-top: 0;
  border-radius: 0 0 3px 3px;
  z-index: 3;
  letter-spacing: .2px;
}
.dropdown li { height: 37.3px; line-height: 41px; padding-left: 6px; color: #222; }
.dropdown .on { background: #1967d2; color: #fff; }

.btn-rows { margin-top: 35px; display: flex; flex-direction: column; gap: 6px; padding-left: 3px; }
.btn-row { display: flex; gap: 7px; }
.save-row { margin: 44px 0 0 3px; }
.btn {
  height: 50px;
  background: #3d5361;
  color: #fff;
  border: 0;
  border-radius: 6px;
  font: 20px "Noto Sans", sans-serif;
  padding: 2px 18px 0;
}
.btn-long { letter-spacing: .24px; }
.btn-dots { width: 51px; padding: 0; }
.btn-big { height: 55px; padding: 2px 31px 0; }

/* modal shot */
.shot-modal { left: 599px; top: 1131px; width: 950px; height: 723px; background: #666; overflow: hidden; z-index: 4; }
.ghost-lines {
  position: absolute;
  left: 0;
  top: 197px;
  width: 11px;
  height: 397px;
  background: repeating-linear-gradient(180deg, #4c4c4c 0 1px, transparent 1px 39px, #4c4c4c 39px 40px, transparent 40px 64.2px);
}
.ghost-dash {
  position: absolute;
  left: 912px;
  top: 183px;
  width: 22px;
  height: 400px;
  background:
    repeating-linear-gradient(90deg, #666 0 3px, transparent 3px 8px),
    repeating-linear-gradient(180deg, #575757 0 1px, transparent 1px 64.2px);
}
.ghost-left { position: absolute; left: 0; top: 0; width: 160px; height: 100%; color: #222; font-size: 16px; }
.gl { position: absolute; left: 0; line-height: 20px; }
.g1 { top: 38px; } .g2 { top: 159px; } .g3 { top: 272px; } .g4 { top: 338px; } .g5 { top: 400px; } .g6 { top: 464px; }
.gb { position: absolute; left: 0; background: #1a2329; }
.gb1 { top: 594px; height: 35px; width: 11px; }
.gb2 { top: 634px; height: 37px; width: 11px; }
.gb3 { top: 674px; height: 33px; width: 139px; }
.gd1 { top: 607px; color: #8b9094; }
.gd2 { top: 645px; color: #8b9094; left: -4px; }
.gd3 { top: 686px; color: #8b9094; left: -1px; white-space: nowrap; }
.ghost-right {
  position: absolute;
  left: 909px;
  top: 204px;
  display: flex;
  flex-direction: column;
  gap: 46.2px;
}
.gm { width: 18px; height: 18px; filter: brightness(.48); }
.dialog {
  position: absolute;
  left: 11px;
  top: 19px;
  width: 902px;
  height: 675px;
  background: #fff;
  border-radius: 6px 6px 0 0;
  overflow: hidden;
  padding: 0 51px 0 34px;
}
.dlg-head { display: flex; justify-content: space-between; align-items: center; height: 74px; padding-top: 24px; border-bottom: 1px solid #eee; }
.dlg-title { margin: 0; font-size: 21.5px; font-weight: 700; color: #222; }
.dlg-x { font-size: 24px; font-weight: 300; color: #333; margin-right: 6px; }
.dlg-sub { margin: 38px 0 0; font-size: 22px; font-weight: 400; color: #333; line-height: 32px; }
.grid {
  display: grid;
  grid-template-columns: repeat(14, 57.5px);
  grid-auto-rows: 59.2px;
  place-items: center;
  margin: 16px 0 0 -2.5px;
}
.gi { width: 28px; height: 28px; }
.sbar { position: absolute; right: 0; top: 0; width: 15px; height: 100%; background: #fafafa; }
.sb-up { position: absolute; left: 3px; top: 5px; border: 5px solid transparent; border-top: 0; border-bottom: 8px solid #888; }
.sb-thumb { position: absolute; left: 3px; top: 20px; width: 9px; height: 99px; background: #8b8b8b; border-radius: 5px; }
.sb-down { position: absolute; left: 3px; bottom: 3px; border: 5px solid transparent; border-bottom: 0; border-top: 8px solid #888; }

.arrows { position: absolute; left: 0; top: 0; width: 1600px; height: 1863px; z-index: 5; pointer-events: none; }
```
